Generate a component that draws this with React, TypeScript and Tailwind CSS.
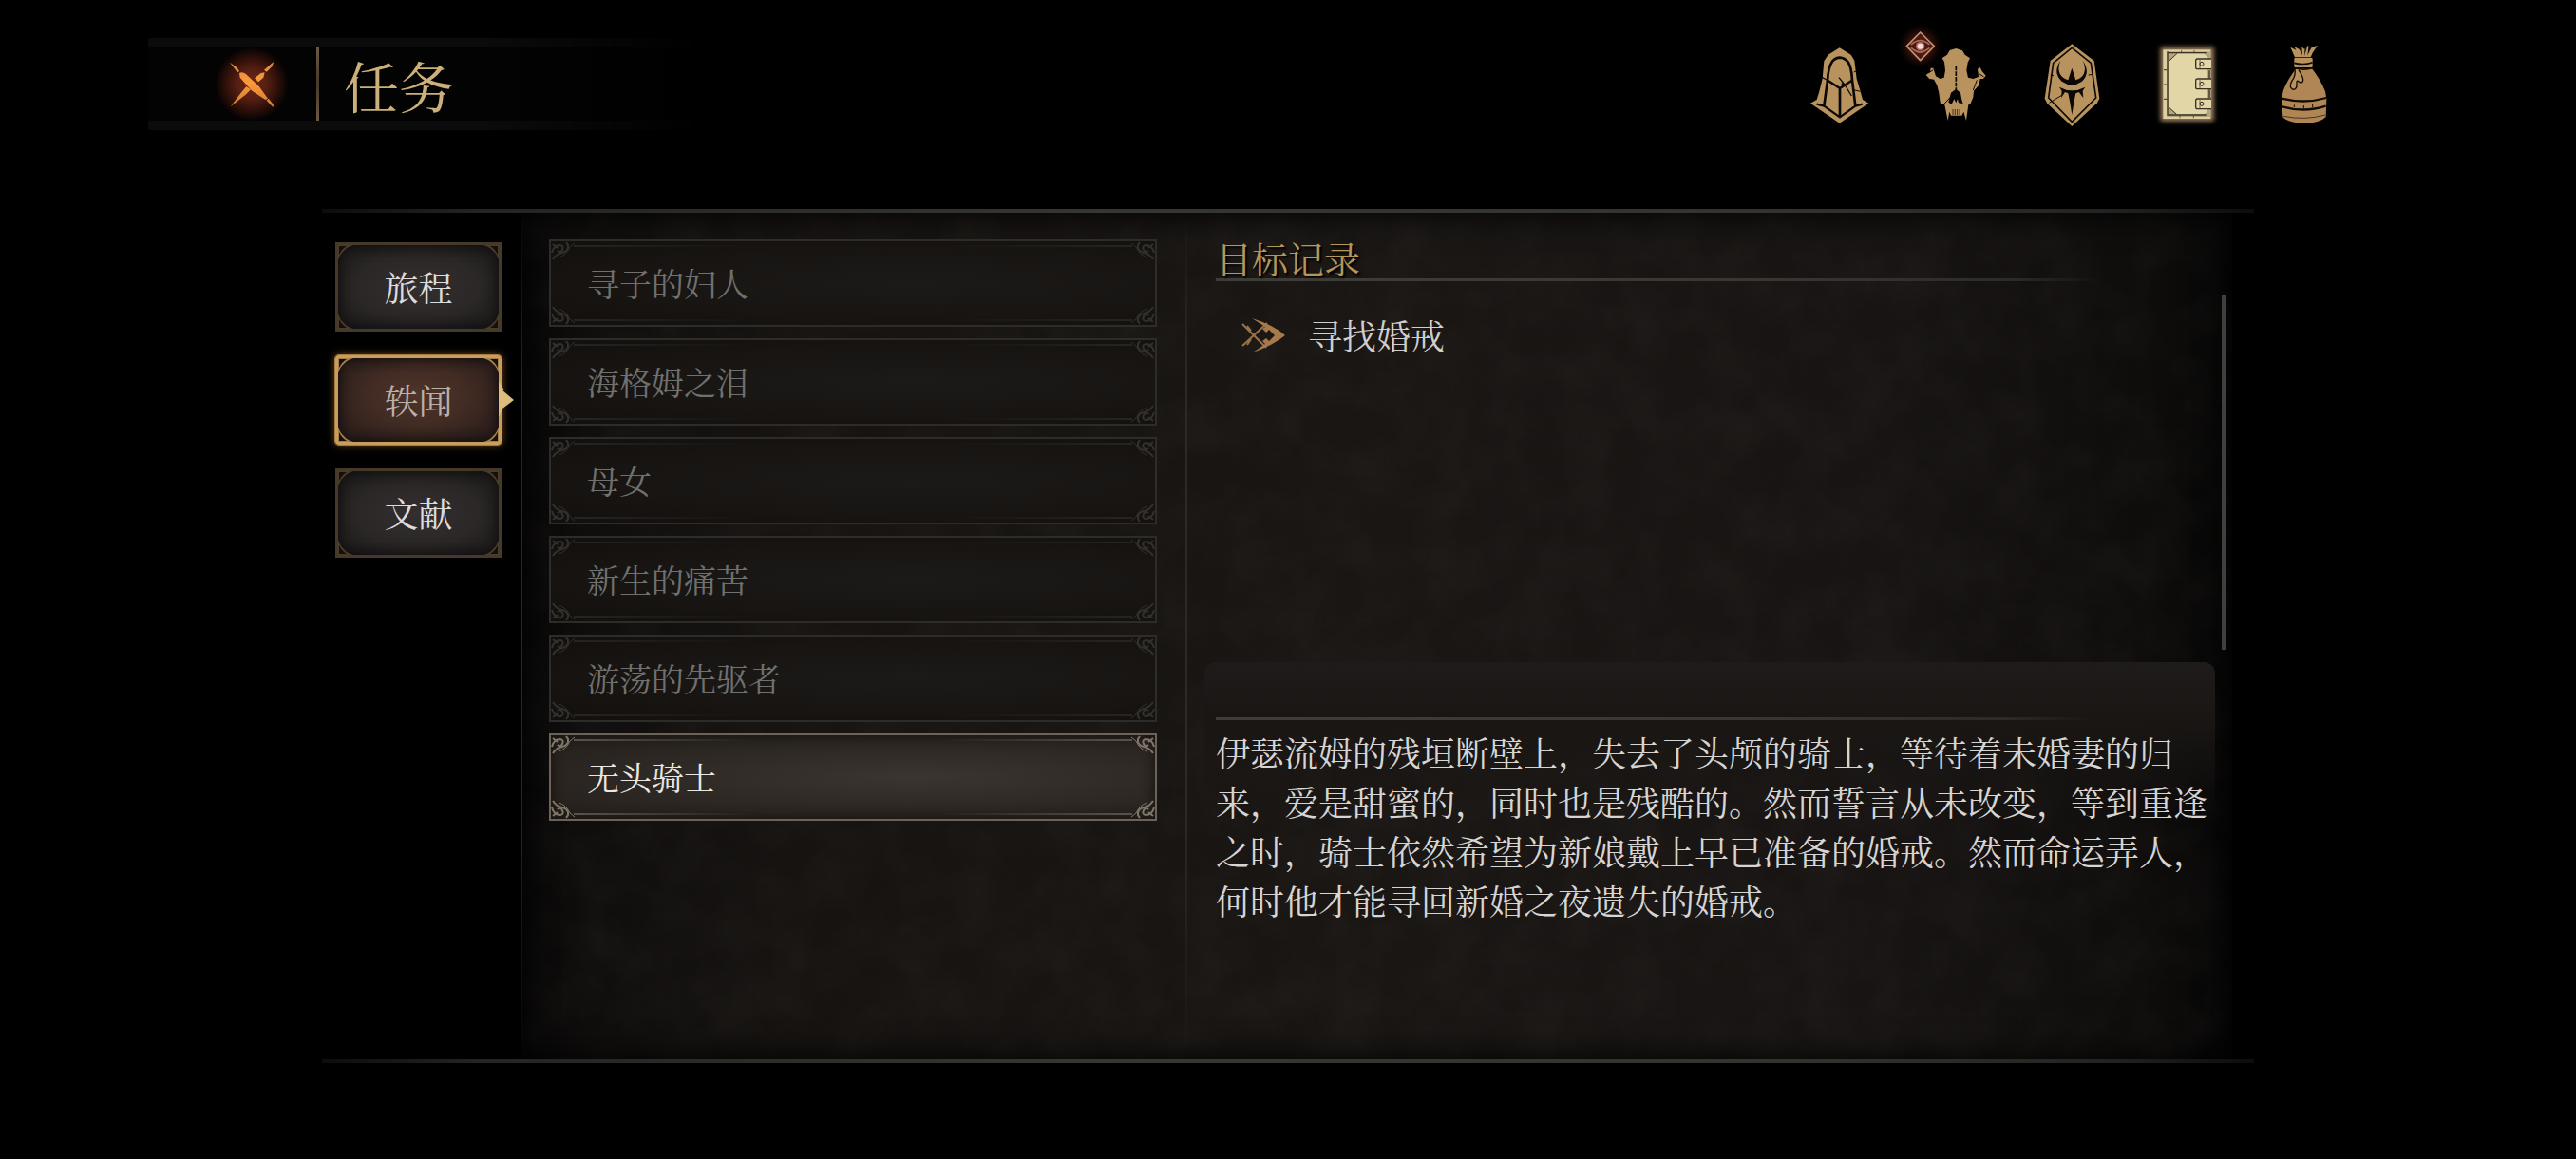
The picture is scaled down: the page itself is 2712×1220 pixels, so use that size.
import { useState } from 'react';
import type { ReactNode } from 'react';
import clsx from 'clsx';

interface Quest {
    title: string;
    goal: string;
    story: string;
}

const tabs = ['旅程', '轶闻', '文献'];

const story =
    '伊瑟流姆的残垣断壁上，失去了头颅的骑士，等待着未婚妻的归来，爱是甜蜜的，同时也是残酷的。然而誓言从未改变，等到重逢之时，骑士依然希望为新娘戴上早已准备的婚戒。然而命运弄人，何时他才能寻回新婚之夜遗失的婚戒。';

const quests: Quest[] = [
    { title: '寻子的妇人', goal: '', story: '' },
    { title: '海格姆之泪', goal: '', story: '' },
    { title: '母女', goal: '', story: '' },
    { title: '新生的痛苦', goal: '', story: '' },
    { title: '游荡的先驱者', goal: '', story: '' },
    { title: '无头骑士', goal: '寻找婚戒', story },
];

// Header icons share one drawing scale, three units to a pixel
const NavIcon = ({ label, viewBox, children }: { label: string; viewBox: string; children: ReactNode }) => (
    <button type="button" aria-label={label} className="h-24 w-[122px]">
        <svg viewBox={viewBox} className="h-24 w-[122px] overflow-visible" fill="none" strokeLinejoin="round">
            {children}
        </svg>
    </button>
);

const HelmetIcon = () => (
    <NavIcon label="角色" viewBox="-12 60 366 288">
        <path fill="#b8935e" d="M170 88 L206 110 L217 128 L224 186 L236 226 L243 252 L262 263 L170 326 L78 263 L98 252 L106 226 L116 186 L121 130 L134 110 Z" />
        <g stroke="#0b0805" strokeWidth="8">
            <path d="M121 272 L132 190 Q134 150 147 131 Q158 119 171 119 Q186 120 197 133 Q208 150 210 190 L220 272" />
            <path d="M98 266 L121 272 L171 307 L220 272 L242 266" strokeWidth="7" />
            <path d="M134 192 L171 216 L208 192 M171 216 V305" />
            <path d="M113 180 L134 192 M168 182 L186 204 L208 240 M176 200 L190 208" strokeWidth="4" />
            <path d="M210 220 L236 226 M215 165 L226 160" strokeWidth="3" />
        </g>
    </NavIcon>
);

const SkullIcon = () => (
    <NavIcon label="技能" viewBox="354 60 366 288">
        <defs>
            <radialGradient id="badge-glow">
                <stop offset="0" stopColor="#6d2718" stopOpacity="0.9" />
                <stop offset="0.6" stopColor="#3b130c" stopOpacity="0.7" />
                <stop offset="1" stopColor="#1a0805" stopOpacity="0" />
            </radialGradient>
        </defs>
        <path
            fill="#b8935e"
            d="M538 90 L558 97 L566 110 L582 121 L575 134 L571 160 L576 182 L592 186 L609 180 L606 155 L614 150 L620 162 L632 176 L624 186 L614 186 L610 206 L594 224 L592 244 L583 266 L577 268 L570 318 L562 290 L556 302 L522 302 L517 290 L512 318 L502 268 L488 262 L484 230 L478 206 L468 188 L454 186 L443 174 L456 164 L458 152 L466 152 L474 178 L488 186 L500 182 L504 160 L501 132 L494 121 L510 110 L518 96 Z"
        />
        <path fill="#050302" d="M538 218 L552 230 L556 252 L560 264 L546 262 L543 250 L538 262 L532 250 L524 266 L514 260 L522 230 Z" />
        <path stroke="#0b0805" strokeWidth="5" strokeDasharray="14 3" d="M538 146 V224" />
        <path stroke="#0b0805" strokeWidth="3" d="M524 240 L498 268 M604 190 L592 222 M466 158 L450 168 M608 168 L626 180" />
        <path stroke="#4a3020" strokeWidth="3" d="M528 282 V300 M535 282 V300 M542 282 V300 M549 282 V300" />
        <circle cx="425" cy="83" r="70" fill="url(#badge-glow)" />
        <path fill="#4c1812" stroke="#bf9270" strokeWidth="5" d="M425 39 L469 83 L425 128 L382 83 Z" />
        <path stroke="#a96a58" strokeWidth="5" d="M396 78 Q425 52 454 78 M396 88 Q425 114 454 88" />
        <path stroke="#a96a58" strokeWidth="3" d="M404 94 Q425 114 446 94" />
        <circle cx="425" cy="83" r="14" fill="#b8705f" />
        <circle cx="425" cy="83" r="9" fill="#f3dcd0" />
    </NavIcon>
);

const ShieldIcon = () => (
    <NavIcon label="徽记" viewBox="-180 60 366 288">
        <path fill="#b8935e" d="M4 76 L74 129 L91 248 L84 262 L4 336 L-74 264 L-82 248 L-64 129 Z" />
        <path stroke="#120c07" strokeWidth="5" d="M4 88 L64 136 L80 246 L4 322 L-70 246 L-55 136 Z" />
        <path fill="#0b0704" d="M-32 128 Q-58 166 -28 194 Q4 216 36 194 Q64 166 38 128 Q56 168 26 186 L16 190 L4 152 L-8 190 L-18 186 Q-48 168 -32 128 Z" />
        <path fill="#0b0704" d="M-36 212 Q4 234 46 212 L38 224 L40 246 L26 228 L16 232 L10 262 L4 300 L-2 262 L-8 232 L-18 228 L-30 246 L-28 224 Z" />
        <path stroke="#120c07" strokeWidth="3" d="M-68 262 L-28 238 M56 174 L70 172 M-54 176 L-64 174" />
    </NavIcon>
);

const JournalIcon = () => (
    <NavIcon label="任务" viewBox="186 60 366 288">
        <defs>
            <filter id="journal-glow" x="-30%" y="-30%" width="160%" height="160%">
                <feGaussianBlur stdDeviation="8" />
            </filter>
        </defs>
        <rect x="284" y="86" width="168" height="234" fill="#a08060" filter="url(#journal-glow)" />
        <rect x="292" y="94" width="150" height="218" fill="#dccfa0" />
        <rect x="304" y="100" width="138" height="206" fill="#b3a67e" />
        <path fill="#e2d5a6" d="M312 128 L334 106 H420 L432 118 V290 L422 298 H336 L312 278 Z" />
        <g stroke="#3a3226" strokeWidth="4">
            <path d="M306 100 V302 M304 104 H428 M306 300 H428 M438 160 V185 M438 220 V246" />
            <path d="M310 130 L336 106 M312 278 L334 298 M294 158 H304 M294 204 H304 M294 250 H304" strokeWidth="3" />
            <path d="M350 96 V104 M390 96 V104 M345 302 V310 M388 302 V310" strokeWidth="2" />
        </g>
        {[123, 186, 249].map((y) => (
            <g key={y} stroke="#3a3226" strokeWidth="4">
                <path fill="#e2d5a6" d={`M444 ${y} H400 Q395 ${y} 395 ${y + 6} V${y + 26} Q395 ${y + 32} 400 ${y + 32} H444`} />
                <circle cx="414" cy={y + 16} r="6" strokeWidth="3" />
                <path d={`M408 ${y + 3} V${y + 30}`} strokeWidth="2" />
            </g>
        ))}
    </NavIcon>
);

const BagIcon = () => (
    <NavIcon label="背包" viewBox="552 60 366 288">
        <path fill="#b8935e" d="M694 86 L712 95 L706 84 L728 96 L726 82 L738 92 L750 80 L754 90 L780 80 L764 104 L758 118 H708 L700 100 Z" />
        <rect x="706" y="120" width="58" height="30" rx="3" fill="#b8935e" />
        <path fill="#b08655" d="M712 154 H762 Q790 190 804 226 L808 250 L806 306 Q790 324 738 327 Q684 324 670 306 L666 246 L672 222 Q684 190 712 154 Z" />
        <g stroke="#130c06" strokeWidth="5">
            <path d="M706 136 Q736 144 764 134 M710 153 Q738 160 764 152" />
            <path d="M666 248 Q738 266 808 246 M668 274 Q738 294 806 272" strokeWidth="7" />
            <path d="M706 268 V276 M736 270 V280 M764 266 V276" strokeWidth="3" />
            <path d="M672 304 Q740 318 804 300" strokeWidth="2" />
            <path fill="#b8935e" strokeWidth="4" d="M708 156 Q712 176 698 194 Q688 214 702 220 Q716 220 714 200 Q712 188 722 196 Q734 202 734 188 Q732 176 720 158" />
        </g>
        <path fill="#0b0704" d="M716 80 L732 112 L730 84 Z M740 84 L738 114 L748 80 Z M764 80 L748 112 L752 82 Z" />
    </NavIcon>
);

const CloseIcon = () => (
    <svg viewBox="0 0 138 144" className="h-12 w-[46px]">
        <defs>
            <linearGradient id="blade" x1="0" y1="0" x2="0" y2="1">
                <stop offset="0" stopColor="#d98a3c" />
                <stop offset="0.45" stopColor="#fb9a3c" />
                <stop offset="1" stopColor="#d07a30" />
            </linearGradient>
        </defs>
        <g fill="url(#blade)">
            <path d="M138 0 L134 14 L116 32 L108 26 Z M110 34 L106 50 L90 64 L78 52 L98 36 Z M52 78 L66 88 L50 104 L2 142 L34 100 Z" />
            <path d="M0 2 L22 18 L30 30 L24 34 Z M30 36 Q38 30 50 38 L92 78 L120 116 L112 120 L70 92 L32 50 Z M116 122 L122 116 L138 136 L136 144 Z" />
        </g>
    </svg>
);

const GoalMarker = () => (
    <svg viewBox="0 0 46 36" className="h-9 w-[46px]" fill="none" stroke="#9c7347" strokeWidth="2">
        <path d="M1 6 L26 31 M1 29 L27 5 M6 8 L10 13 M6 28 L10 22" />
        <path fill="#a8794a" stroke="none" d="M11 0 Q34 7 46 18 Q34 28 12 36 L25 27 L22 24 L26 21 L29 24 L35 18 L29 12 L26 15 L22 11 L25 9 Z" />
    </svg>
);

// Worn stone surface laid over the panels
const Grain = () => (
    <svg aria-hidden="true" className="pointer-events-none absolute inset-0 h-full w-full opacity-[0.04]">
        <filter id="grain">
            <feTurbulence type="fractalNoise" baseFrequency="0.02" numOctaves="6" seed="4" />
            <feColorMatrix type="matrix" values="0 0 0 0 0.5  0 0 0 0 0.42  0 0 0 0 0.36  1.6 0 0 0 -0.5" />
        </filter>
        <rect width="100%" height="100%" filter="url(#grain)" />
    </svg>
);

// Knotted ornament in a corner of a quest row
const RowCorner = ({ className }: { className: string }) => (
    <svg viewBox="0 0 26 20" className={clsx('absolute h-5 w-[26px]', className)} fill="none" stroke="currentColor" strokeWidth="2">
        <path d="M2 19 Q6 13 12 12 Q19 10 18 4 L16 1" />
        <path d="M1 12 Q3 4 10 4 Q14 5 12 9 Q10 13 7 10" />
        <path d="M8 17 Q16 15 20 6 L25 2" strokeWidth="1" />
        <path d="M2 3 L7 7" />
    </svg>
);

const QuestRow = ({ quest, active, onSelect }: { quest: Quest; active: boolean; onSelect: () => void }) => {
    const tone = active ? 'text-[#80766a]' : 'text-[#32312e]';
    const innerLine = active
        ? 'bg-[linear-gradient(90deg,#5b534a,transparent_32%,transparent_66%,#5b534a)]'
        : 'bg-[linear-gradient(90deg,#262523,transparent_32%,transparent_66%,#262523)]';
    return (
        <button
            type="button"
            aria-pressed={active}
            onClick={onSelect}
            className={clsx(
                'relative flex h-[92px] w-full items-center border-2 px-[38px] text-left text-[34px] leading-[48px]',
                active
                    ? 'border-[#6b635a] bg-[radial-gradient(ellipse_at_60%_50%,#3a3531_0%,#2e2925_50%,#241f1b_100%)] text-[#e8e7e4] shadow-[inset_0_0_14px_#14100d]'
                    : 'border-[#2c2c2a] bg-[radial-gradient(ellipse_at_60%_50%,#1c1a18_0%,#171412_60%,#120f0d_100%)] text-[#70706e]'
            )}
        >
            <span className={clsx('absolute inset-x-6 top-1 h-[2px]', innerLine)} />
            <span className={clsx('absolute inset-x-6 bottom-1 h-[2px]', innerLine)} />
            <RowCorner className={clsx('left-0 top-0', tone)} />
            <RowCorner className={clsx('right-0 top-0 -scale-x-100', tone)} />
            <RowCorner className={clsx('bottom-0 left-0 -scale-y-100', tone)} />
            <RowCorner className={clsx('bottom-0 right-0 -scale-100', tone)} />
            {quest.title}
        </button>
    );
};

const TabCorner = ({ className }: { className: string }) => (
    <svg viewBox="0 0 16 16" className={clsx('absolute h-4 w-4', className)} fill="currentColor">
        <path d="M0 0 H16 Q9 2 6 6 Q2 9 0 16 Z" />
        <path fill="#15100c" d="M1 1 H9 Q4 4 1 10 Z" />
    </svg>
);

const TabButton = ({ label, active, onSelect }: { label: string; active: boolean; onSelect: () => void }) => {
    const tone = active ? 'text-[#a97f48]' : 'text-[#4b3d2b]';
    return (
        <button
            type="button"
            role="tab"
            aria-selected={active}
            onClick={onSelect}
            className={clsx(
                'relative h-[94px] w-full border-[3px] text-[36px] leading-[48px]',
                active
                    ? 'rounded-sm border-[#c99d5c] bg-[radial-gradient(ellipse_at_50%_45%,#4f342a_0%,#412b23_45%,#211819_100%)] text-[#b9b0ab] shadow-[0_0_0_1px_#a47a42,0_0_10px_#7c5025,inset_0_0_14px_#0c0808]'
                    : 'border-[#463929] bg-[radial-gradient(ellipse_at_50%_50%,#332e2f_0%,#2b2727_55%,#191717_100%)] text-[#dddcdc] shadow-[inset_0_0_16px_#0a0909]'
            )}
        >
            <TabCorner className={clsx('left-0 top-0', tone)} />
            <TabCorner className={clsx('right-0 top-0 -scale-x-100', tone)} />
            <TabCorner className={clsx('bottom-0 left-0 -scale-y-100', tone)} />
            <TabCorner className={clsx('bottom-0 right-0 -scale-100', tone)} />
            {label}
            {active && (
                <svg viewBox="0 0 16 40" className="absolute -right-4 top-6 h-10 w-4" fill="#dcbd7c">
                    <path d="M0 0 L6 10 L4 10 L16 20 L4 29 L0 38 Z" />
                </svg>
            )}
        </button>
    );
};

const FrameLine = () => (
    <div className="h-1 bg-[linear-gradient(90deg,#0c0c0c,#242522_8%,#363732_40%,#33342e_75%,#242522_92%,#0c0c0c)]" />
);

const Rule = () => (
    <hr className="h-[3px] w-[88%] border-0 bg-[linear-gradient(90deg,#3e3d38,#383732_60%,#2c2b28_90%,transparent)]" />
);

export default function App() {
    const [tab, setTab] = useState(1);
    const [selected, setSelected] = useState(5);
    const quest = quests[selected];

    return (
        <div className="flex min-h-screen flex-col bg-black pb-[101px] pt-10 font-['Noto_Serif_CJK_SC','Noto_Sans_CJK_SC',serif] font-normal">
            <header className="flex items-center justify-between pl-[156px] pr-[226px]">
                <div className="flex h-[97px] w-[584px] items-center border-y-[10px] border-[#0b0b0b] bg-[#030303] mask-r-from-60%">
                    <button
                        type="button"
                        aria-label="关闭"
                        className="ml-[64px] flex h-[77px] w-[90px] items-center justify-center bg-[radial-gradient(circle_closest-side,#6a2716_0%,#571f12_40%,#2a0e08_75%,transparent_100%)]"
                    >
                        <CloseIcon />
                    </button>
                    <span className="ml-[23px] h-full w-[3px] bg-[linear-gradient(180deg,#6b5840,#46392a_50%,#6b5840)]" />
                    <h1 className="ml-[26px] text-[58px] leading-[72px] text-[#cbb07a]">任务</h1>
                </div>
                <nav className="flex">
                    <HelmetIcon />
                    <SkullIcon />
                    <ShieldIcon />
                    <JournalIcon />
                    <BagIcon />
                </nav>
            </header>

            <main className="mx-[12.5%] mt-[83px] flex flex-1 flex-col">
                <FrameLine />
                <div className="flex flex-1">
                    <div role="tablist" className="flex w-[209px] shrink-0 flex-col gap-[25px] pl-[14px] pr-5 pt-[31px]">
                        {tabs.map((label, i) => (
                            <TabButton key={label} label={label} active={i === tab} onSelect={() => setTab(i)} />
                        ))}
                    </div>

                    <div className="relative mr-[23px] flex flex-1 bg-[linear-gradient(90deg,#070606_0%,#100e0d_4%,#161311_15%,#191614_50%,#171413_80%,#0f0d0c_95%,#050505_100%)]">
                        <Grain />
                        <div className="pointer-events-none absolute inset-0 shadow-[inset_0_0_36px_#000]" />
                        <div className="relative w-[2px] bg-[linear-gradient(180deg,transparent,#262626_20%,#262626_70%,transparent)]" />
                        <section className="relative flex w-[698px] shrink-0 flex-col gap-3 pl-[28px] pr-[30px] pt-7">
                            {quests.map((q, i) => (
                                <QuestRow key={q.title} quest={q} active={i === selected} onSelect={() => setSelected(i)} />
                            ))}
                        </section>
                        <div className="relative w-[2px] bg-[linear-gradient(180deg,transparent,#2b2a29_20%,#2b2a29_70%,transparent)]" />

                        <div className="relative flex flex-1 flex-col">
                            <section className="flex h-[473px] pl-[30px] pr-1.5">
                                <div className="flex-1 pt-[25px]">
                                    <h2 className="text-[38px] leading-[44px] text-[#b4965c] [text-shadow:2px_2px_2px_#000]">目标记录</h2>
                                    <Rule />
                                    {quest.goal && (
                                        <p className="mt-[35px] flex items-center gap-6 pl-[27px] text-[36px] leading-[44px] text-[#d0cfcd]">
                                            <GoalMarker />
                                            {quest.goal}
                                        </p>
                                    )}
                                </div>
                                <div className="mb-[13px] mt-[86px] w-[5px] bg-[#403f3b]" />
                            </section>
                            <section className="mx-[18px] flex-1 rounded-t-xl bg-[linear-gradient(180deg,#1f1b1a_0%,#191614_14%,transparent_40%)] pl-3 pt-[58px]">
                                <Rule />
                                <p className="mt-2 text-[36px] leading-[52px] text-[#d6d5d3]">{quest.story}</p>
                            </section>
                        </div>
                    </div>
                </div>
                <FrameLine />
            </main>
        </div>
    );
}
